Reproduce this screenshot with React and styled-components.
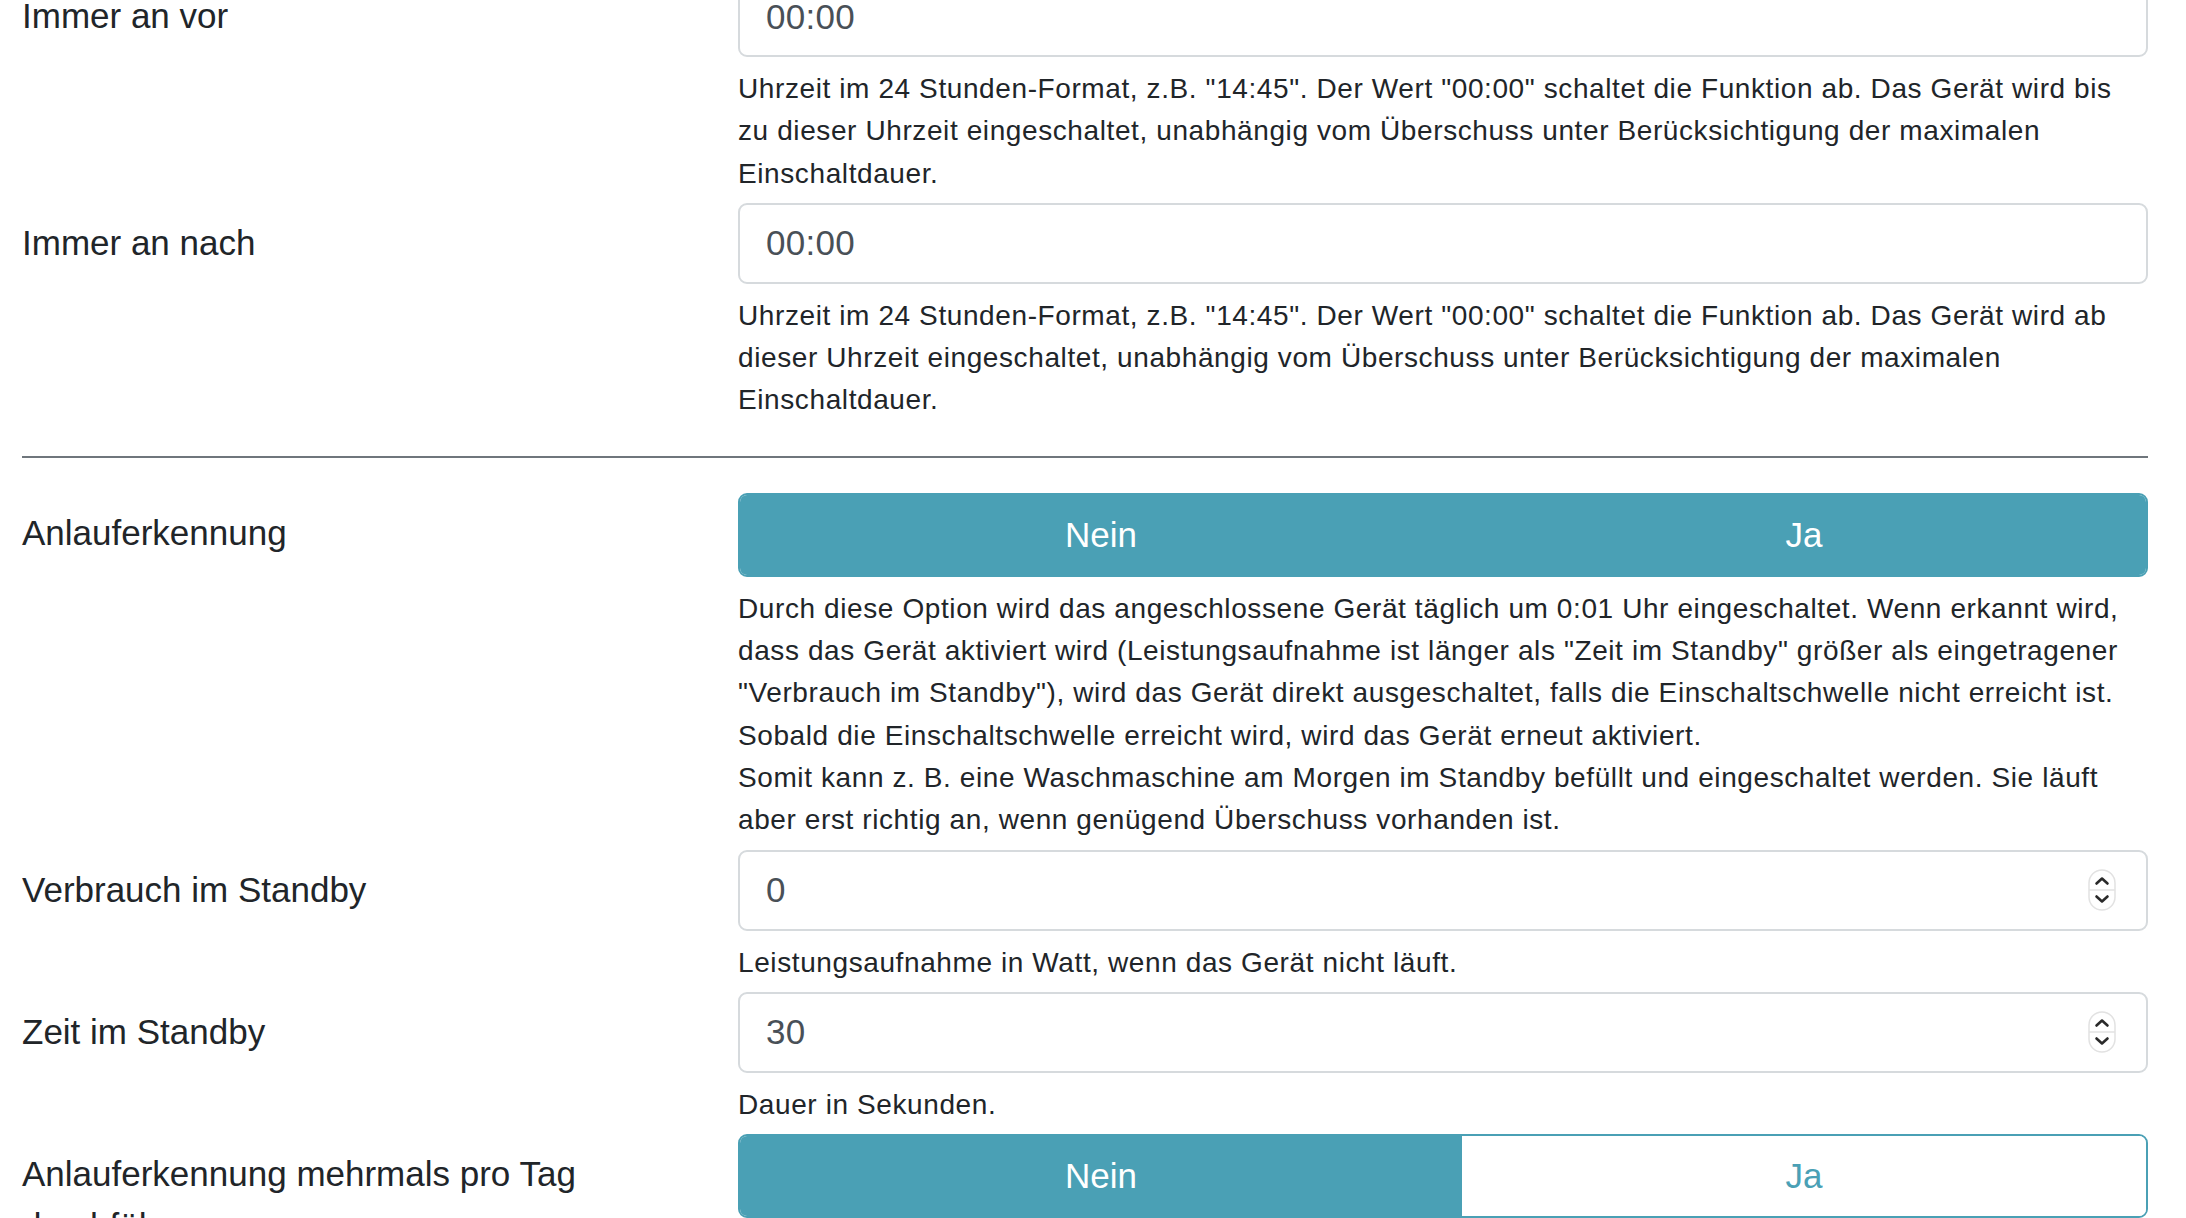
import React from 'react';
import styled, { createGlobalStyle } from 'styled-components';

const GlobalStyle = createGlobalStyle`
  html, body {
    margin: 0;
    padding: 0;
    background: #fff;
  }
  body {
    font-family: "Liberation Sans", Arial, Helvetica, sans-serif;
    color: #212529;
  }
  * {
    box-sizing: border-box;
  }
`;

const Page = styled.div`
  padding: 0 38px 0 22px;
  margin-top: -24px;
  overflow: hidden;
  height: 1242px;
`;

const Row = styled.div`
  display: grid;
  grid-template-columns: 694px 1fr;
  column-gap: 22px;
  margin-bottom: 8px;
`;

const Label = styled.label`
  font-size: 35px;
  line-height: 52px;
  padding-top: 14px;
  color: #212529;
`;

const Field = styled.div`
  display: flex;
  flex-direction: column;
  min-width: 0;
`;

const InputBox = styled.div`
  display: flex;
  align-items: center;
  height: 81px;
  border: 2px solid #d6dadd;
  border-radius: 9px;
  padding: 0 30px 0 26px;
  background: #fff;
`;

const Input = styled.input`
  flex: 1;
  min-width: 0;
  border: none;
  outline: none;
  background: transparent;
  font-family: inherit;
  font-size: 35px;
  letter-spacing: 0.3px;
  color: #495057;
  padding: 0;
`;

const Help = styled.div`
  margin-top: 11px;
  font-size: 28px;
  line-height: 42.3px;
  letter-spacing: 0.6px;
  white-space: nowrap;
  color: #212529;
`;

const Divider = styled.hr`
  border: none;
  border-top: 2px solid #6f767c;
  margin: 34px 0 35px;
`;

const Toggle = styled.div`
  display: grid;
  grid-template-columns: 724fr 686fr;
  height: 84px;
  border: 2px solid #4aa0b5;
  border-radius: 9px;
  overflow: hidden;
`;

const ToggleButton = styled.button`
  border: none;
  margin: 0;
  font-family: inherit;
  font-size: 35px;
  cursor: pointer;
  background: ${p => (p.$active ? '#4aa0b5' : '#fff')};
  color: ${p => (p.$active ? '#fff' : '#4aa0b5')};
`;

const Spinner = () => (
  <svg width="28" height="42" viewBox="0 0 28 42" style={{ flex: 'none' }}>
    <rect x="1" y="1" width="26" height="40" rx="13" fill="#fff" stroke="#e2e2e2" strokeWidth="1.5" />
    <line x1="1" y1="21" x2="27" y2="21" stroke="#e2e2e2" strokeWidth="1.5" />
    <path d="M8.5 14.5 L14 9.5 L19.5 14.5" fill="none" stroke="#2a2a2a" strokeWidth="2.6" strokeLinecap="round" strokeLinejoin="round" />
    <path d="M8.5 27.5 L14 32.5 L19.5 27.5" fill="none" stroke="#2a2a2a" strokeWidth="2.6" strokeLinecap="round" strokeLinejoin="round" />
  </svg>
);

const Lines = ({ lines }) => (
  <Help>
    {lines.map((line, i) => (
      <React.Fragment key={i}>
        {i > 0 && <br />}
        {line}
      </React.Fragment>
    ))}
  </Help>
);

const TextRow = ({ label, value, help }) => (
  <Row>
    <Label>{label}</Label>
    <Field>
      <InputBox>
        <Input defaultValue={value} />
      </InputBox>
      <Lines lines={help} />
    </Field>
  </Row>
);

const NumberRow = ({ label, value, help }) => (
  <Row>
    <Label>{label}</Label>
    <Field>
      <InputBox>
        <Input defaultValue={value} inputMode="numeric" />
        <Spinner />
      </InputBox>
      <Lines lines={help} />
    </Field>
  </Row>
);

const ToggleRow = ({ label, nein, ja, help }) => (
  <Row>
    <Label>{label}</Label>
    <Field>
      <Toggle>
        <ToggleButton $active={nein}>Nein</ToggleButton>
        <ToggleButton $active={ja}>Ja</ToggleButton>
      </Toggle>
      {help && <Lines lines={help} />}
    </Field>
  </Row>
);

export default function App() {
  return (
    <>
      <GlobalStyle />
      <Page>
        <TextRow
          label="Immer an vor"
          value="00:00"
          help={[
            'Uhrzeit im 24 Stunden-Format, z.B. "14:45". Der Wert "00:00" schaltet die Funktion ab. Das Gerät wird bis',
            'zu dieser Uhrzeit eingeschaltet, unabhängig vom Überschuss unter Berücksichtigung der maximalen',
            'Einschaltdauer.',
          ]}
        />
        <TextRow
          label="Immer an nach"
          value="00:00"
          help={[
            'Uhrzeit im 24 Stunden-Format, z.B. "14:45". Der Wert "00:00" schaltet die Funktion ab. Das Gerät wird ab',
            'dieser Uhrzeit eingeschaltet, unabhängig vom Überschuss unter Berücksichtigung der maximalen',
            'Einschaltdauer.',
          ]}
        />
        <Divider />
        <ToggleRow
          label="Anlauferkennung"
          nein
          ja
          help={[
            'Durch diese Option wird das angeschlossene Gerät täglich um 0:01 Uhr eingeschaltet. Wenn erkannt wird,',
            'dass das Gerät aktiviert wird (Leistungsaufnahme ist länger als "Zeit im Standby" größer als eingetragener',
            '"Verbrauch im Standby"), wird das Gerät direkt ausgeschaltet, falls die Einschaltschwelle nicht erreicht ist.',
            'Sobald die Einschaltschwelle erreicht wird, wird das Gerät erneut aktiviert.',
            'Somit kann z. B. eine Waschmaschine am Morgen im Standby befüllt und eingeschaltet werden. Sie läuft',
            'aber erst richtig an, wenn genügend Überschuss vorhanden ist.',
          ]}
        />
        <NumberRow
          label="Verbrauch im Standby"
          value="0"
          help={['Leistungsaufnahme in Watt, wenn das Gerät nicht läuft.']}
        />
        <NumberRow label="Zeit im Standby" value="30" help={['Dauer in Sekunden.']} />
        <ToggleRow label="Anlauferkennung mehrmals pro Tag durchführen" nein ja={false} />
      </Page>
    </>
  );
}
